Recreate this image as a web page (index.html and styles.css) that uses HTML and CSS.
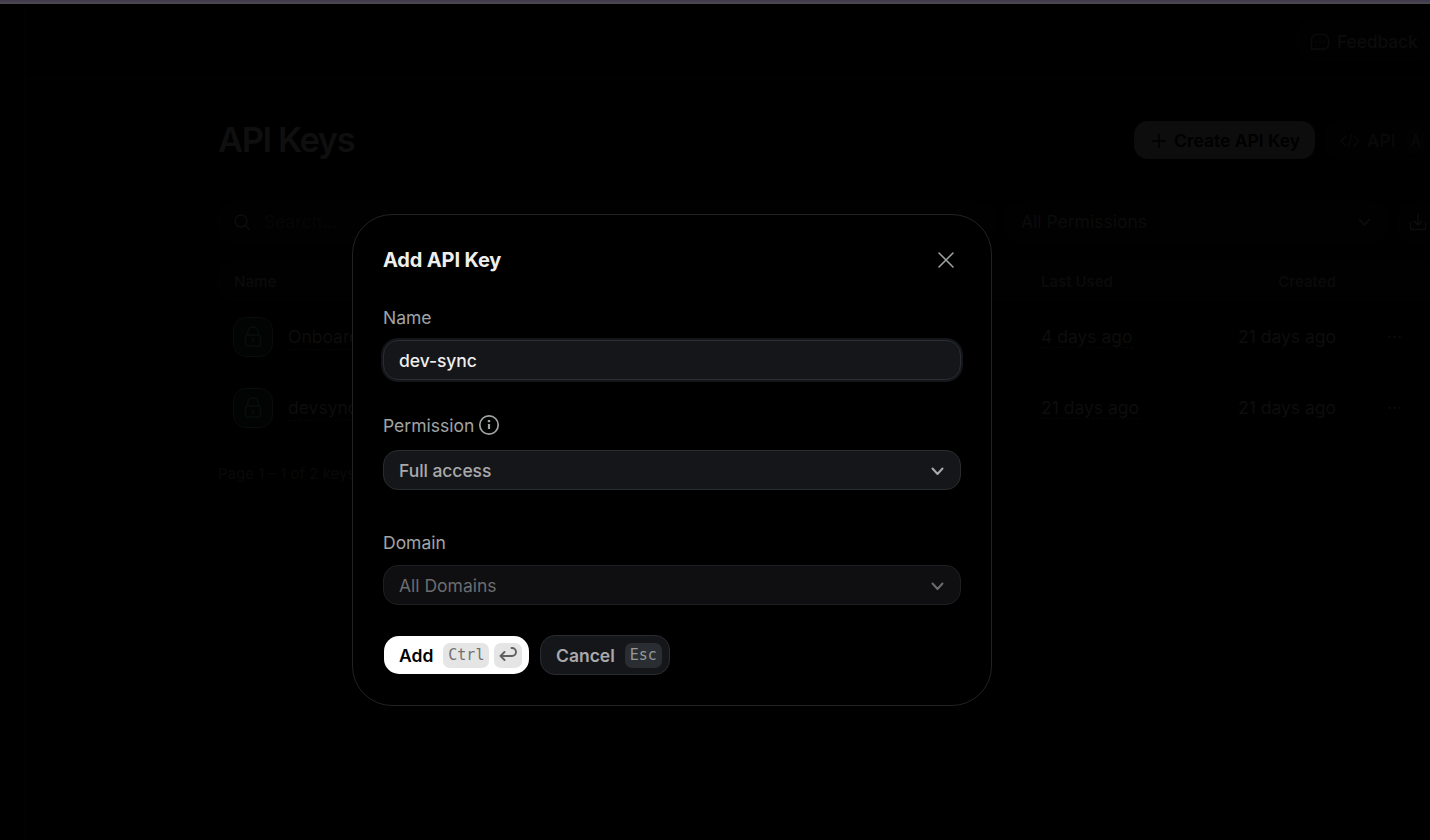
FILE: index.html
```html
<!DOCTYPE html>
<html lang="en">
<head>
<meta charset="utf-8">
<title>API Keys</title>
<link rel="stylesheet" href="styles.css">
</head>
<body>
<div class="window-edge"></div>
<div class="app">
  <aside class="sidebar"></aside>
  <main class="main">
    <header class="topbar">
      <button class="btn feedback">
        <svg width="20" height="18" viewBox="0 0 20 18" fill="none" stroke="currentColor" stroke-width="1.4"><path d="M1.500 16V6.500a5 5 0 0 1 5-5h7a5 5 0 0 1 5 5v5a4.500 4.500 0 0 1-4.500 4.500z"/><path d="M5.500 8.700h1.500M9.300 8.700h1.500M13 8.700h1.500" stroke-width="1.600"/></svg>
        Feedback
      </button>
    </header>
    <section class="content">
      <div class="heading">
        <h1>API Keys</h1>
        <div class="heading-actions">
          <button class="create">
            <svg width="16" height="16" viewBox="0 0 16 16" fill="none" stroke="currentColor" stroke-width="1.400"><path d="M8 1v14M1 8h14"/></svg>
            Create API Key
          </button>
          <button class="btn api">
            <svg width="20" height="14" viewBox="0 0 20 14" fill="none" stroke="currentColor" stroke-width="1.400" stroke-linecap="round" stroke-linejoin="round"><path d="M6 2 1 7l5 5M14 2l5 5-5 5M11.500 1l-3 12"/></svg>
            API <kbd class="api-key">A</kbd>
          </button>
        </div>
      </div>
      <div class="filters">
        <div class="field search">
          <svg width="16" height="16" viewBox="0 0 16 16" fill="none" stroke="currentColor" stroke-width="1.400" stroke-linecap="round"><circle cx="7" cy="7" r="6"/><path d="m11.500 11.500 3.700 3.700"/></svg>
          <span>Search...</span>
        </div>
        <div class="field permissions">
          <span>All Permissions</span>
          <svg width="13" height="9" viewBox="0 0 13 9" fill="none" stroke="currentColor" stroke-width="2" stroke-linecap="round" stroke-linejoin="round"><path d="m1.500 1.500 5 5.500 5-5.500"/></svg>
        </div>
        <div class="field download">
          <svg width="18" height="18" viewBox="0 0 18 18" fill="none" stroke="currentColor" stroke-width="1.400" stroke-linecap="round" stroke-linejoin="round"><path d="M9 1v11M5 8l4 4 4-4M1.500 9.500V15a1.500 1.500 0 0 0 1.500 1.500h12a1.500 1.500 0 0 0 1.500-1.500V9.500"/></svg>
        </div>
      </div>
      <div class="table">
        <div class="row head"><span>Name</span><span>Last Used</span><span class="right">Created</span><span></span></div>
        <div class="row">
          <div class="name"><span class="tile"><svg width="18" height="21" viewBox="0 0 18 21" fill="none" stroke="currentColor" stroke-width="1.500"><path d="M3.700 9V6.300a5.300 5.300 0 0 1 10.600 0V9"/><rect x="1.500" y="9" width="15" height="11" rx="1.500"/><path d="M9 12.500v4"/></svg></span><span class="dashed">Onboarding</span></div>
          <div><span class="dashed">4 days ago</span></div><span class="right">21 days ago</span><span class="dots">···</span>
        </div>
        <div class="row">
          <div class="name"><span class="tile"><svg width="18" height="21" viewBox="0 0 18 21" fill="none" stroke="currentColor" stroke-width="1.500"><path d="M3.700 9V6.300a5.300 5.300 0 0 1 10.600 0V9"/><rect x="1.500" y="9" width="15" height="11" rx="1.500"/><path d="M9 12.500v4"/></svg></span><span class="dashed">devsync</span></div>
          <div><span class="dashed">21 days ago</span></div><span class="right">21 days ago</span><span class="dots">···</span>
        </div>
      </div>
      <p class="pagination">Page 1 – 1 of 2 keys</p>
    </section>
  </main>
</div>

<div class="overlay">
  <div class="modal" role="dialog">
    <div class="modal-head">
      <h2>Add API Key</h2>
      <svg class="close" width="16" height="16" viewBox="0 0 16 16" fill="none" stroke="currentColor" stroke-width="1.500" stroke-linecap="round"><path d="m1 1 14 14M15 1 1 15"/></svg>
    </div>
    <label class="label">Name</label>
    <input class="control focused" value="dev-sync">
    <label class="label label-permission"><span>Permission</span>
      <svg width="22" height="22" viewBox="0 0 22 22" fill="none" stroke="currentColor" stroke-width="1.700"><circle cx="11" cy="11" r="9.200"/><path d="M11 10v5" stroke-width="2.200"/><path d="M11 6v2.200" stroke-width="2.400"/></svg>
    </label>
    <div class="control select">Full access
      <svg width="13" height="9" viewBox="0 0 13 9" fill="none" stroke="currentColor" stroke-width="2" stroke-linecap="round" stroke-linejoin="round"><path d="m1.500 1.500 5 5.500 5-5.500"/></svg>
    </div>
    <label class="label label-domain">Domain</label>
    <div class="control select disabled">All Domains
      <svg width="13" height="9" viewBox="0 0 13 9" fill="none" stroke="currentColor" stroke-width="2" stroke-linecap="round" stroke-linejoin="round"><path d="m1.500 1.500 5 5.500 5-5.500"/></svg>
    </div>
    <div class="actions">
      <button class="add"><span class="text">Add</span><span class="keys"><kbd>Ctrl</kbd><kbd class="enter"><svg width="18" height="15" viewBox="0 0 18 15" fill="none" stroke="currentColor" stroke-width="1.900" stroke-linecap="round" stroke-linejoin="round"><path d="M12.500 1h.5a4 4 0 0 1 0 8H1.500M5.500 5l-4 4 4 4"/></svg></kbd></span></button>
      <button class="cancel"><span class="text">Cancel</span><kbd>Esc</kbd></button>
    </div>
  </div>
</div>
</body>
</html>
```

FILE: styles.css
```css
* { box-sizing: border-box; }
body {
  margin: 0;
  height: 840px;
  overflow: hidden;
  background: #000;
  font: 17.5px/24px Inter, sans-serif;
}
button, input { font: inherit; }
h1, h2, p { margin: 0; }
svg { flex: none; display: block; }

.window-edge { height: 4px; background: #433b4f; border-bottom: 2px solid #4a474f; }
.app { display: flex; height: 836px; color: #0d0d0d; }
.sidebar { width: 25px; flex: none; border-right: 1px solid #020202; }
.main { width: 1437px; flex: none; }
.topbar { height: 75px; border-bottom: 1px solid #020202; padding: 17px 0 0 1272px; }
.btn {
  display: flex; align-items: center; height: 40px; padding: 2px 12px 0; gap: 7px;
  border: 1px solid #020202; border-radius: 15px; background: #010101; color: #090909;
  font-weight: 500; white-space: nowrap;
}
.feedback { color: #0b0b0b; letter-spacing: -0.15px; }
.content { width: 1220px; margin-left: 193px; padding-top: 41px; }
.heading, .heading-actions, .filters, .name { display: flex; align-items: center; }
.heading { justify-content: space-between; height: 40px; }
.heading h1 { font-size: 34.5px; line-height: 40px; font-weight: 600; letter-spacing: -1.4px; color: #0f0f0f; }
.heading-actions { gap: 11px; }
.create {
  display: flex; align-items: center; gap: 7px; width: 181px; height: 38px; padding: 2px 0 0 17px;
  border: 0; border-radius: 14px; background: #0d0d0d; color: #000; font-weight: 600; white-space: nowrap;
}
.api { width: 112px; padding-left: 13px; }
.api-key { width: 24px; height: 25px; margin-left: 4px; border-radius: 6px; background: #020202; font: 15px/25px "DejaVu Sans Mono", monospace; text-align: center; }
.filters { gap: 10px; margin-top: 42px; }
.field { display: flex; align-items: center; height: 40px; padding: 0 15px; border: 1px solid #020202; border-radius: 15px; background: #010101; }
.search { width: 777px; gap: 14px; }
.search span { color: #060606; }
.permissions { width: 383px; padding-right: 16px; justify-content: space-between; color: #0b0b0b; }
.download { width: 40px; padding: 0 10px; }
.table { margin-top: 20px; }
.row { display: grid; grid-template-columns: 808px 145px 150px 70px; align-items: center; height: 71px; padding-left: 15px; }
.head { height: 39px; border: 1px solid #020202; border-radius: 15px; background: #010101; font-size: 15px; font-weight: 600; color: #0a0a0a; }
.head { grid-template-columns: 807px 145px 150px 70px; }
.right { text-align: right; }
.name { gap: 15px; }
.name .dashed { margin-top: 2px; }
.tile { display: grid; place-items: center; width: 40px; height: 40px; border: 1px solid #0a0b0b; border-radius: 13px; background: #020403; color: #060e0c; }
.dashed { border-bottom: 1px dashed #050505; }
.dots { padding-left: 51px; }
.pagination { margin-top: 19px; font-size: 15px; color: #090909; }

.overlay { position: absolute; inset: 0; padding: 214px 0 0 352px; }
.modal { display: flex; flex-direction: column; width: 640px; height: 492px; padding: 30px; border: 1px solid #212223; border-radius: 40px; background: #000; color: #a1a4a5; }
.modal-head { display: flex; align-items: center; justify-content: space-between; height: 30px; padding-right: 7px; }
.modal-head h2 { font-size: 20px; line-height: 30px; font-weight: 700; letter-spacing: -0.15px; color: #eee; }
.label { display: flex; align-items: center; height: 24px; margin: 31px 0 10px; }
.label-permission { gap: 4px; margin: 33px 0 13px; }
.label-permission span { padding-top: 2px; }
.label-domain { margin: 41px 0 10px; }
.control {
  display: flex; align-items: center; justify-content: space-between; width: 578px; height: 40px;
  padding: 0 16px 0 15px; border: 1px solid #2a2d30; border-radius: 15px; background: #15161a;
  color: #a9a9ab; font-weight: 500; letter-spacing: -0.06px;
}
.select { padding-top: 2px; }
.focused { color: #eee; outline: 0; box-shadow: 0 0 0 2px #14151a; }
.disabled { border-color: #1d1f21; background: #0f0f11; color: #6c6c6e; font-weight: 400; letter-spacing: 0; }
.actions { display: flex; align-items: center; gap: 11px; margin: 30px 0 0 1px; }
.add, .cancel { display: flex; align-items: center; gap: 10px; border-radius: 15px; font-weight: 600; padding: 0 0 0 15px; }
.add { width: 145px; height: 38px; border: 0; background: #fff; color: #000; }
.cancel { width: 130px; height: 40px; border: 1px solid #2a2d30; background: #15161a; color: #a9a9ab; }
.text { padding-top: 2px; }
.keys { display: flex; gap: 5px; }
.actions kbd { display: grid; place-items: center; height: 25px; padding: 0 5px; border-radius: 7px; background: #e5e5e5; color: #707070; font: 15px/25px "DejaVu Sans Mono", monospace; }
.actions .enter { padding-bottom: 2px; color: #606060; }
.actions .cancel kbd { background: #2a2d31; color: #96989a; }
```
